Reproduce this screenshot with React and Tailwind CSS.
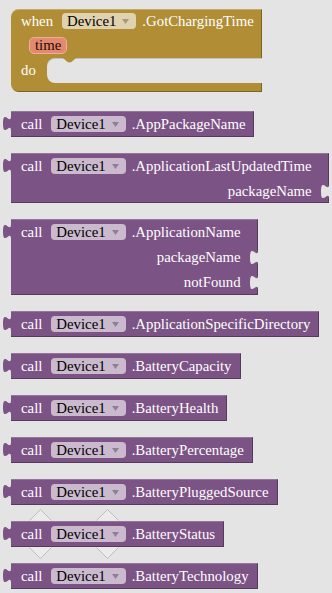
import React from 'react';

const TAB_PATH = 'M8,0 V5 c0,10 -8,-8 -8,7.5 s8,-2.5 8,7.5 V0 Z';

function DevicePill({ gold }) {
  return (
    <div
      className={
        gold
          ? 'flex items-center h-[16px] rounded-[4px] bg-[#e0d2ae] pl-[5px] pr-[7px]'
          : 'flex items-center h-[16px] rounded-[4px] bg-[#cbbace] pl-[5px] pr-[7px]'
      }
    >
      <span className="text-black leading-none">Device1</span>
      <svg className="ml-[6px]" width="7" height="5" viewBox="0 0 7 5">
        <path d="M0,0H7L3.5,5Z" fill={gold ? '#a89a74' : '#8d8093'} />
      </svg>
    </div>
  );
}

// event block at the top
function EventBlock() {
  return (
    <div className="relative w-fit ml-[11px]">
      <div className="bg-[#b18e35] rounded-tl-[8px] pl-[10px] pr-[8px] shadow-[inset_0_1px_0_rgba(255,255,255,0.25),inset_-1px_0_0_rgba(0,0,0,0.3)]">
        <div className="flex items-center h-[24px]">
          <span className="text-white">when</span>
          <div className="ml-[9px]">
            <DevicePill gold />
          </div>
          <span className="ml-[6px] text-white">.GotChargingTime</span>
        </div>
        <div className="flex items-center h-[25px] pl-[8px]">
          <div className="flex items-center h-[17px] px-[5px] rounded-[5px] bg-[#e2896f] border border-[#f0ae99] text-[#2b0800] leading-none">
            time
          </div>
        </div>
      </div>
      <div className="flex h-[25px] bg-[#b18e35]">
        <div className="flex items-center w-[36px] pl-[10px] text-white">do</div>
        <div className="relative flex-1 bg-[#e4e4e4] rounded-l-[8px] shadow-[inset_0_1px_0_rgba(0,0,0,0.15)]">
          <svg className="absolute left-[15px] top-0" width="15" height="5" viewBox="0 0 15 5">
            <path d="M0,0 C3,0 4,4.5 7.5,4.5 C11,4.5 12,0 15,0 Z" fill="#b18e35" />
          </svg>
        </div>
      </div>
      <div className="h-[9px] bg-[#b18e35] rounded-bl-[8px] shadow-[inset_-1px_-1px_0_rgba(0,0,0,0.3)]"></div>
    </div>
  );
}

function CallBlock({ method, inputs = [], rowClass = 'h-[25px]', className = '' }) {
  const hasInputs = inputs.length > 0;
  return (
    <div
      className={`relative w-fit ml-[11px] bg-[#7c5385] shadow-[inset_0_1px_0_rgba(255,255,255,0.2),inset_-1px_-1px_0_rgba(0,0,0,0.3)] ${className}`}
    >
      <svg className="absolute left-[-8px] top-0" width="8" height="20" viewBox="0 0 8 20">
        <path d={TAB_PATH} fill="#7c5385" />
      </svg>
      <div
        className={
          hasInputs
            ? 'flex items-center h-[26px] pl-[10px] pr-[17px]'
            : 'flex items-center h-[26px] pl-[10px] pr-[9px]'
        }
      >
        <span className="text-white">call</span>
        <div className="ml-[9px]">
          <DevicePill />
        </div>
        <span className="ml-[6px] text-white whitespace-nowrap">{method}</span>
      </div>
      {inputs.map((name) => (
        <div key={name} className={`relative flex items-center justify-end pr-[17px] text-white ${rowClass}`}>
          {name}
          <svg className="absolute right-0 top-0" width="8" height="20" viewBox="0 0 8 20">
            <path d={TAB_PATH} fill="#e4e4e4" />
          </svg>
        </div>
      ))}
    </div>
  );
}

export default function App() {
  return (
    <div className="relative w-[332px] h-[593px] overflow-hidden bg-[#e4e4e4] pt-[9px] font-['Liberation_Serif','Times_New_Roman',serif] text-[14.8px] leading-none">
      {/* faint connection arrows around BatteryStatus */}
      <svg className="absolute left-0 top-0" width="332" height="593">
        <path d="M29.5,520.5 L40.5,509.5 L51.5,520.5" fill="#ebebeb" stroke="#bdbdbd" />
        <path d="M96.5,520.5 L107.5,509.5 L118.5,520.5" fill="#ebebeb" stroke="#bdbdbd" />
        <path d="M29.5,547.5 L40.5,558.5 L51.5,547.5" fill="#ebebeb" stroke="#bdbdbd" />
        <path d="M96.5,547.5 L107.5,558.5 L118.5,547.5" fill="#ebebeb" stroke="#bdbdbd" />
      </svg>

      <EventBlock />

      <div className="flex flex-col gap-[16px] mt-[19px]">
        <CallBlock method=".AppPackageName" />
        <CallBlock method=".ApplicationLastUpdatedTime" inputs={['packageName']} rowClass="h-[24px]" />
        <CallBlock method=".ApplicationName" inputs={['packageName', 'notFound']} rowClass="h-[25px]" />
        <CallBlock method=".ApplicationSpecificDirectory" />
        <CallBlock method=".BatteryCapacity" />
        <CallBlock method=".BatteryHealth" />
        <CallBlock method=".BatteryPercentage" />
        <CallBlock method=".BatteryPluggedSource" />
        <CallBlock method=".BatteryStatus" />
        <CallBlock method=".BatteryTechnology" />
      </div>
    </div>
  );
}
